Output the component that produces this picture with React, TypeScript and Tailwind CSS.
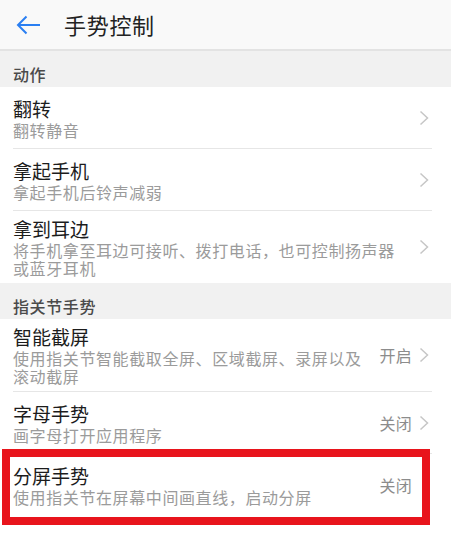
import React from "react";

type Row = {
  title: string;
  sub: string;
  value?: string;
  chevron?: boolean;
  divider?: boolean;
  highlight?: boolean;
};

const font = { fontFamily: '"Noto Sans CJK SC", "Noto Sans", sans-serif' };

const actionRows: Row[] = [
  { title: "翻转", sub: "翻转静音", chevron: true, divider: true },
  { title: "拿起手机", sub: "拿起手机后铃声减弱", chevron: true, divider: true },
  {
    title: "拿到耳边",
    sub: "将手机拿至耳边可接听、拨打电话，也可控制扬声器或蓝牙耳机",
    chevron: true,
  },
];

const knuckleRows: Row[] = [
  {
    title: "智能截屏",
    sub: "使用指关节智能截取全屏、区域截屏、录屏以及滚动截屏",
    value: "开启",
    chevron: true,
    divider: true,
  },
  { title: "字母手势", sub: "画字母打开应用程序", value: "关闭", chevron: true, divider: true },
  {
    title: "分屏手势",
    sub: "使用指关节在屏幕中间画直线，启动分屏",
    value: "关闭",
    highlight: true,
  },
];

function Chevron({ hidden }: { hidden?: boolean }) {
  return (
    <svg width="10" height="16" viewBox="0 0 10 16" className={hidden ? "invisible" : ""}>
      <path d="M1.5 1.5 L8.5 8 L1.5 14.5" fill="none" stroke="#c6c6c6" strokeWidth="1.5" />
    </svg>
  );
}

function SectionLabel({ text }: { text: string }) {
  return (
    <div className="h-[36px] bg-[#f1f1f1] pl-[13px] pt-[11px]">
      <span className="text-[16px] leading-[22px] tracking-[0.6px] font-medium text-[#4a4a4a]">{text}</span>
    </div>
  );
}

function SettingRow({ row }: { row: Row }) {
  return (
    <div className="relative bg-white pl-[13px] pr-[19px]">
      <div
        className={
          "flex min-h-[62px] items-center py-[6px] " +
          (row.divider ? "border-b border-[#e6e6e6]" : "")
        }
      >
        <div className="flex-1 min-w-0">
          <div className="text-[19px] leading-[24px] text-[#1c1c1c]">{row.title}</div>
          <div className="text-[16px] leading-[18px] tracking-[0.6px] text-[#9b9b9b]">{row.sub}</div>
        </div>
        <div className="ml-3 flex items-center gap-[7px] pr-[3px]">
          {row.value && (
            <span className="text-[16px] tracking-[0.2px] text-[#8c8c8c]">{row.value}</span>
          )}
          <Chevron hidden={!row.chevron} />
        </div>
      </div>
      {row.highlight && (
        <div className="pointer-events-none absolute left-[2px] top-[-5px] h-[76px] w-[428px] border-[8px] border-[#e8141c]" />
      )}
    </div>
  );
}

export default function App() {
  return (
    <div className="h-[535px] w-[451px] overflow-hidden bg-white" style={font}>
      <div className="flex h-[51px] items-center border-b-2 border-[#e3e3e3] bg-[#f9f9f9]">
        <svg width="26" height="20" viewBox="0 0 26 20" className="ml-[16px]">
          <path d="M2 10 H24 M10.5 1.5 L2 10 L10.5 18.5" fill="none" stroke="#2a7ff2" strokeWidth="2" />
        </svg>
        <span className="ml-[22px] text-[22px] tracking-[0.7px] text-[#222]">手势控制</span>
      </div>
      <SectionLabel text="动作" />
      {actionRows.map((r) => (
        <SettingRow key={r.title} row={r} />
      ))}
      <SectionLabel text="指关节手势" />
      {knuckleRows.map((r) => (
        <SettingRow key={r.title} row={r} />
      ))}
    </div>
  );
}
